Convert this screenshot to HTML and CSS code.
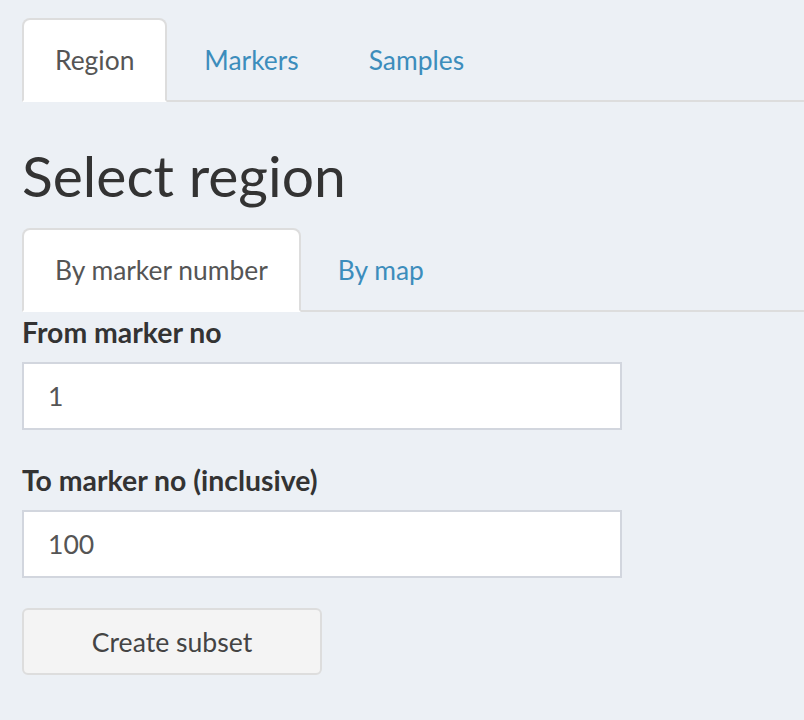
FILE: index.html
```html
<!DOCTYPE html>
<html lang="en">
<head>
<meta charset="utf-8">
<title>Select region</title>
<link rel="stylesheet" href="styles.css">
</head>
<body>
<div class="content">
  <ul class="nav-tabs">
    <li class="tab active"><a>Region</a></li>
    <li class="tab"><a>Markers</a></li>
    <li class="tab"><a>Samples</a></li>
  </ul>
  <h2 class="title">Select region</h2>
  <ul class="nav-tabs">
    <li class="tab active"><a>By marker number</a></li>
    <li class="tab"><a>By map</a></li>
  </ul>
  <div class="form-group">
    <label class="label" for="from">From marker no</label>
    <input class="form-control" id="from" type="text" value="1">
  </div>
  <div class="form-group">
    <label class="label" for="to">To marker no (inclusive)</label>
    <input class="form-control" id="to" type="text" value="100">
  </div>
  <button class="btn" type="button">Create subset</button>
</div>
</body>
</html>
```
FILE: styles.css
```css
html, body {
  margin: 0;
  padding: 0;
  background: #ecf0f5;
}
body {
  font-family: Lato, "Liberation Sans", sans-serif;
  color: #333;
}
.content {
  padding: 18px 0 0 22px;
}
.nav-tabs {
  list-style: none;
  margin: 0;
  padding: 0;
  display: flex;
  border-bottom: 2px solid #ddd;
}
.tab {
  margin: 0 4px -2px 0;
}
.tab a {
  display: block;
  padding: 20px 31px;
  line-height: 40px;
  font-size: 26.4px;
  color: #3c8dbc;
  border: 2px solid transparent;
  border-radius: 8px 8px 0 0;
}
.tab.active a {
  color: #555;
  background: #fff;
  border-color: #ddd #ddd transparent;
}
.title {
  font-size: 57px;
  font-weight: 400;
  line-height: 66px;
  margin: 40px 0 20px;
  color: #333;
}
.form-group {
  margin-bottom: 30px;
}
.label {
  display: block;
  font-size: 28.4px;
  font-weight: 700;
  line-height: 40px;
  margin-bottom: 10px;
  color: #333;
}
.form-control {
  display: block;
  box-sizing: border-box;
  width: 600px;
  height: 68px;
  margin: 0;
  padding: 0 24px;
  border: 2px solid #d2d6de;
  border-radius: 0;
  background: #fff;
  font-family: Lato, "Liberation Sans", sans-serif;
  font-size: 26.6px;
  color: #555;
  outline: none;
}
.btn {
  display: block;
  box-sizing: border-box;
  width: 300px;
  height: 67px;
  margin-top: 1px;
  padding: 0;
  background: #f4f4f4;
  border: 2px solid #ddd;
  border-radius: 6px;
  font-family: Lato, "Liberation Sans", sans-serif;
  font-size: 26.6px;
  color: #444;
}
```
